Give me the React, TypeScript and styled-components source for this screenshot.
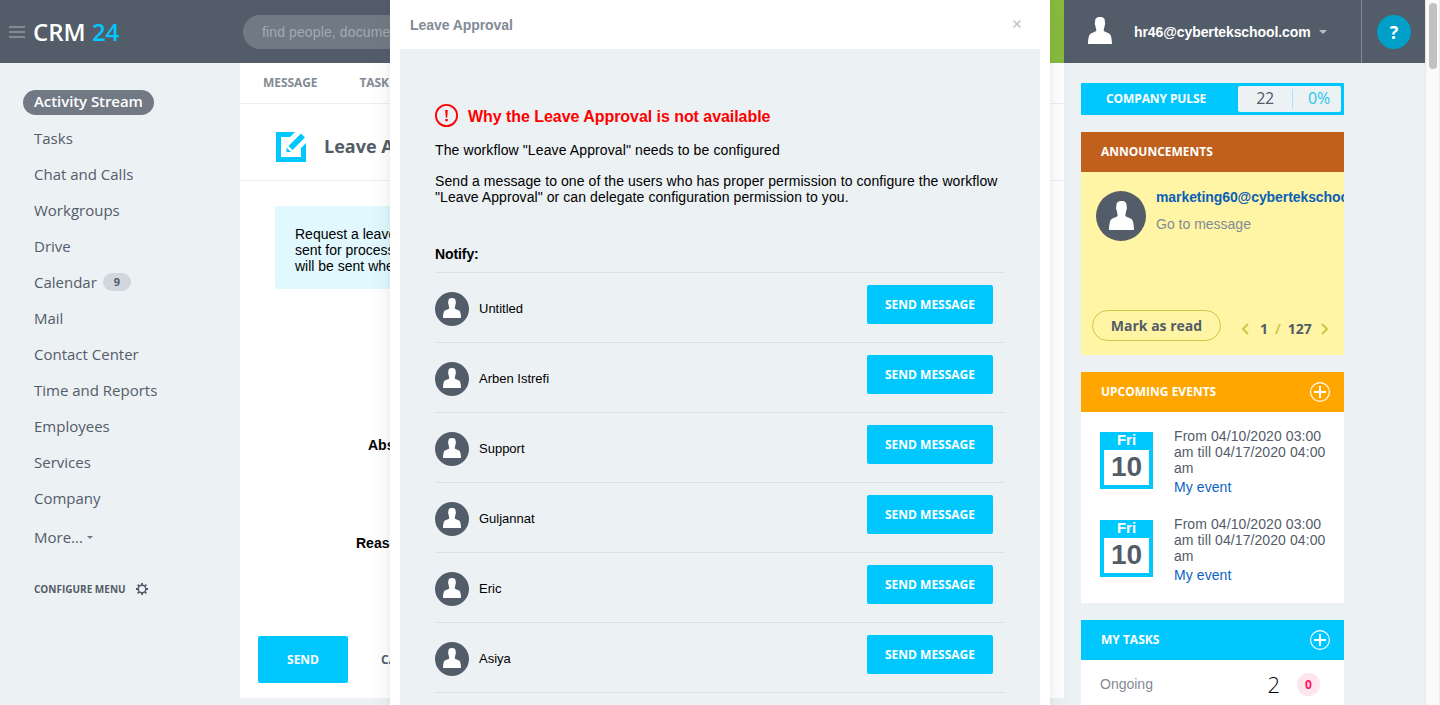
import React from 'react';
import styled, { createGlobalStyle } from 'styled-components';

const sans = `"Liberation Sans", Arial, Helvetica, sans-serif`;
const open = `"Open Sans", "Liberation Sans", sans-serif`;
const cyan = '#00c8ff';
const slate = '#535c69';

const GlobalStyle = createGlobalStyle`
  * { box-sizing: border-box; }
  html, body { margin: 0; padding: 0; overflow: hidden; }
  body { font-family: ${sans}; font-size: 14px; color: #000; background: #ecf1f4; }
`;

const Page = styled.div`
  position: relative;
  width: 1440px;
  height: 705px;
  overflow: hidden;
  display: flex;
  background: #ecf1f4;
`;
const Shell = styled.div`
  width: 1425px;
  display: flex;
  flex-direction: column;
`;
const Header = styled.header`
  height: 63px;
  flex: none;
  display: flex;
  align-items: center;
  background: #535c69;
`;
const Brand = styled.div`
  width: 243px;
  padding-left: 9px;
  display: flex;
  align-items: center;
  gap: 8px;
`;
const Burger = styled.div`
  width: 16px;
  height: 12px;
  margin-top: 1px;
  display: flex;
  flex-direction: column;
  justify-content: space-between;
  span { height: 2px; background: #848b94; }
`;
const Logo = styled.div`
  font: 600 24px/32px ${open};
  color: #fff;
  white-space: pre;
  span { color: ${cyan}; }
`;
const Search = styled.div`
  width: 300px;
  height: 34px;
  border-radius: 17px;
  background: #717a84;
  padding-left: 19px;
  font-size: 14px;
  line-height: 34px;
  letter-spacing: 0.12px;
  color: #a3a9b1;
`;
const ClockBlock = styled.div`
  width: 174px;
  height: 63px;
  margin-left: auto;
  background: #86bb3c;
`;
const UserBlock = styled.div`
  width: 298px;
  height: 63px;
  border-right: 1px solid #868d96;
  display: flex;
  align-items: center;
  padding: 1px 0 0 24px;
  color: #fff;
  svg { flex: none; margin-top: -4px; }
`;
const UserName = styled.div`
  margin-left: 22px;
  width: 177px;
  font-weight: bold;
  font-size: 14px;
  letter-spacing: -0.09px;
  white-space: nowrap;
`;
const Caret = styled.i<{ $size: number; $color: string }>`
  border: ${p => p.$size}px solid transparent;
  border-top-color: ${p => p.$color};
  border-bottom: 0;
`;
const HelpBlock = styled.div`
  width: 63px;
  padding: 1px 0 0 15px;
`;
const HelpButton = styled.div`
  width: 34px;
  height: 34px;
  border-radius: 50%;
  background: #009fc7;
  color: #fff;
  text-align: center;
  font: 700 18px/34px ${open};
`;

const Columns = styled.div`
  flex: 1;
  min-height: 0;
  display: flex;
`;
const Nav = styled.nav`
  width: 240px;
  padding: 27px 0 0 23px;
`;
const NavItem = styled.div<{ $active?: boolean }>`
  height: ${p => (p.$active ? 25 : 22)}px;
  width: max-content;
  display: flex;
  align-items: center;
  margin-bottom: ${p => (p.$active ? 12 : 14)}px;
  padding: 0 11px ${p => (p.$active ? 3 : 0)}px;
  border-radius: 13px;
  background: ${p => (p.$active ? '#717a84' : 'transparent')};
  color: ${p => (p.$active ? '#fff' : slate)};
  font: ${p => (p.$active ? 600 : 400)} 15px/22px ${open};
  letter-spacing: ${p => (p.$active ? '-0.07px' : '0')};
`;
const Counter = styled.span`
  width: 28px;
  height: 18px;
  margin-left: 6px;
  border-radius: 9px;
  background: #d0d8de;
  text-align: center;
  font: 700 11px/18px ${open};
`;
const MoreItem = styled(NavItem)`
  margin-top: 17px;
  gap: 4px;
`;
const Configure = styled.div`
  display: flex;
  align-items: center;
  gap: 10px;
  margin: 34px 0 0 11px;
  font: 700 10px/14px ${open};
  color: ${slate};
`;

const Feed = styled.main`
  width: 824px;
  height: 635px;
  background: #fff;
`;
const FeedTabs = styled.div`
  height: 41px;
  padding-left: 23px;
  display: flex;
  gap: 42px;
  border-bottom: 1px solid #eceef0;
  font: 700 12px/39px ${open};
  letter-spacing: -0.08px;
  color: #828b95;
`;
const FeedTitle = styled.div`
  height: 77px;
  padding: 9px 0 0 36px;
  display: flex;
  align-items: center;
  gap: 18px;
  border-bottom: 1px solid #eceef0;
  font: 700 18px/24px ${open};
  color: ${slate};
`;
const TitleText = styled.span`
  margin-top: -1px;
`;
const Hint = styled.div`
  width: 690px;
  height: 83px;
  margin: 25px 0 0 35px;
  padding: 20px 0 0 20px;
  border-radius: 2px;
  background: #e1f8fe;
  font-size: 14px;
  line-height: 16px;
`;
const FormLabel = styled.div<{ $top: number; $left: number }>`
  margin: ${p => p.$top}px 0 0 ${p => p.$left}px;
  font-weight: bold;
  font-size: 14px;
  line-height: 16px;
`;
const FormActions = styled.div`
  display: flex;
  margin: 85px 0 0 18px;
  gap: 33px;
  font: 700 12px/47px ${open};
  color: ${slate};
`;
const SendButton = styled.div`
  width: 90px;
  height: 47px;
  border-radius: 2px;
  background: ${cyan};
  color: #fff;
  text-align: center;
`;

const Side = styled.aside`
  padding: 20px 0 0 17px;
  width: 280px;
`;
const Pulse = styled.div`
  height: 32px;
  padding: 3px;
  display: flex;
  background: ${cyan};
  border-radius: 1px;
  margin-bottom: 17px;
`;
const PulseLabel = styled.div`
  width: 154px;
  padding-left: 22px;
  font: 700 12px/26px ${open};
  letter-spacing: -0.1px;
  color: #fff;
`;
const PulseBox = styled.div`
  width: 103px;
  height: 26px;
  border-radius: 2px;
  background: #ecf1f4;
  display: flex;
  align-items: center;
  font: 400 16px/24px ${open};
`;
const PulseValue = styled.div<{ $accent?: boolean }>`
  width: ${p => (p.$accent ? 48 : 55)}px;
  height: 20px;
  line-height: 19px;
  text-align: center;
  letter-spacing: -0.3px;
  padding-left: ${p => (p.$accent ? 4 : 0)}px;
  border-right: ${p => (p.$accent ? '0' : '1px solid #a6e6f7')};
  color: ${p => (p.$accent ? '#1fc6ee' : slate)};
`;
const Widget = styled.section`
  margin-bottom: 17px;
  background: #fff;
  overflow: hidden;
`;
const WidgetHead = styled.div<{ $color: string }>`
  height: 40px;
  padding: 0 14px 0 20px;
  display: flex;
  align-items: center;
  justify-content: space-between;
  background: ${p => p.$color};
  color: #fff;
  font: 700 12px/40px ${open};
`;
const Announcement = styled.div`
  height: 183px;
  padding: 0 0 14px 11px;
  display: flex;
  flex-direction: column;
  justify-content: space-between;
  background: #fff5a4;
`;
const AnnounceTop = styled.div`
  display: flex;
  gap: 10px;
  padding: 19px 0 0 4px;
`;
const AnnounceText = styled.div`
  margin-top: -2px;
  line-height: 16px;
  color: #828b95;
  white-space: nowrap;
  b { display: block; color: #0b5fb8; margin-bottom: 11px; letter-spacing: -0.08px; }
`;
const AnnounceBottom = styled.div`
  display: flex;
  align-items: center;
`;
const ReadButton = styled.div`
  width: 129px;
  height: 31px;
  border: 1px solid #cfc64c;
  border-radius: 16px;
  text-align: center;
  font: 700 14px/30px ${open};
  color: ${slate};
`;
const Pager = styled.div`
  display: flex;
  align-items: center;
  margin: 6px 0 0 20px;
  font: 700 14px/18px ${open};
  color: ${slate};
  span { color: #d2c54f; margin: 0 7px; }
`;
const Events = styled.div`
  height: 191px;
  padding: 16px 0 0 19px;
  display: flex;
  flex-direction: column;
  gap: 21px;
`;
const EventRow = styled.div`
  height: 67px;
  display: flex;
  gap: 21px;
`;
const DateTile = styled.div`
  width: 53px;
  height: 57px;
  margin-top: 4px;
  padding: 0 4px 4px;
  background: ${cyan};
  color: #fff;
  text-align: center;
  font-weight: bold;
  font-size: 15px;
  line-height: 16px;
`;
const DateNumber = styled.div`
  height: 35px;
  margin-top: 2px;
  background: #fff;
  color: ${slate};
  font-size: 28px;
  line-height: 33px;
`;
const EventText = styled.div`
  width: 160px;
  color: ${slate};
  line-height: 16px;
  letter-spacing: 0.08px;
  a { display: block; margin-top: 3px; color: #0b62c4; }
`;
const TaskRow = styled.div`
  height: 50px;
  display: flex;
  align-items: center;
  padding: 0 24px 0 19px;
  color: #828b95;
`;
const TaskLabel = styled.span`
  margin-top: -2px;
`;
const TaskCount = styled.div`
  margin: -2px 0 0 auto;
  color: #000;
  font: 300 22px/30px ${open};
`;
const TaskBadge = styled.div`
  width: 23px;
  height: 23px;
  margin: -1px 0 0 17px;
  border-radius: 50%;
  background: #ffe5ed;
  color: #ff1361;
  text-align: center;
  font: 700 12px/23px ${open};
`;

const ScrollTrack = styled.div`
  width: 15px;
  padding: 3px 0 0 3px;
  background: #fafafa;
  border-left: 1px solid #e8e8e8;
  border-right: 1px solid #ededed;
`;
const ScrollThumb = styled.div`
  width: 8px;
  height: 66px;
  border-radius: 4px;
  background: #c1c1c1;
`;

const Modal = styled.div`
  position: absolute;
  left: 390px;
  top: 0;
  width: 660px;
  height: 705px;
  padding: 0 10px;
  display: flex;
  flex-direction: column;
  background: #fff;
  box-shadow: 0 7px 21px rgba(83, 92, 105, 0.12), 0 -1px 6px rgba(83, 92, 105, 0.06);
`;
const ModalHead = styled.div`
  height: 49px;
  flex: none;
  display: flex;
  justify-content: space-between;
  align-items: center;
  padding: 1px 19px 0 10px;
  font-weight: bold;
  font-size: 14px;
  letter-spacing: -0.07px;
  color: #828b95;
  svg { margin-top: -3px; }
`;
const ModalBody = styled.div`
  flex: 1;
  overflow: hidden;
  padding: 55px 35px 0;
  background: #ecf1f4;
  line-height: 16px;
`;
const Warning = styled.div`
  height: 24px;
  display: flex;
  align-items: center;
  gap: 9px;
  color: #f00;
  font-weight: bold;
  font-size: 16px;
  letter-spacing: -0.05px;
`;
const WarningText = styled.span`
  margin-top: 2px;
`;
const Paragraph = styled.p`
  margin: 14px 0 15px;
  letter-spacing: 0.11px;
  & + & { margin: 0 0 41px; letter-spacing: 0.08px; }
`;
const NotifyTitle = styled.div`
  font-weight: bold;
  letter-spacing: -0.1px;
  margin-bottom: 10px;
`;
const UserRow = styled.div`
  height: 70px;
  padding: 12px 12px 0 0;
  display: flex;
  border-top: 1px solid #dbe0e4;
  font-size: 13px;
`;
const Person = styled.div`
  flex: 1;
  height: 48px;
  display: flex;
  align-items: center;
  gap: 10px;
`;
const Avatar = styled.div<{ $size: number }>`
  width: ${p => p.$size}px;
  height: ${p => p.$size}px;
  flex: none;
  border-radius: 50%;
  background: ${slate};
  display: flex;
  align-items: center;
  justify-content: center;
  svg { margin-top: -2px; }
`;
const MessageButton = styled.div`
  width: 126px;
  height: 39px;
  border-radius: 2px;
  background: ${cyan};
  color: #fff;
  text-align: center;
  font: 700 12px/39px ${open};
`;

const Bust = ({ w, h }: { w: number; h: number }) => (
  <svg width={w} height={h} viewBox="0 0 24 28" preserveAspectRatio="none">
    <path
      fill="#fff"
      d="M12 0C15.6 0 17 1.6 16.9 5C17.4 6 17.3 8 16.6 9C16.4 10.8 16 12 15.8 12.8V14.6C17.4 16 20.6 16.4 22 17.8C23.4 19.4 23.9 24 24 28H0C.1 24 .6 19.4 2 17.8C3.4 16.4 6.6 16 8.2 14.6V12.8C8 12 7.6 10.8 7.4 9C6.7 8 6.6 6 7.1 5C7 1.6 8.4 0 12 0Z"
    />
  </svg>
);
const Plus = () => (
  <svg width="20" height="20" viewBox="0 0 20 20" fill="none" stroke="#fff">
    <circle cx="10" cy="10" r="9.4" strokeWidth="1.1" />
    <path d="M10 4v12M4 10h12" strokeWidth="2" />
  </svg>
);
const Arrow = ({ d }: { d: string }) => (
  <svg width="8" height="12" viewBox="0 0 8 12" fill="none" stroke="#cfc54c" strokeWidth="2">
    <path d={d} />
  </svg>
);
const Gear = () => (
  <svg width="12" height="12" viewBox="0 0 12 12" fill="none" stroke={slate}>
    <circle cx="6" cy="6" r="3.8" strokeWidth="1.5" />
    <path
      strokeWidth="1.8"
      d="M6 0v2M6 10v2M0 6h2M10 6h2M1.7 1.7l1.4 1.4M8.9 8.9l1.4 1.4M1.7 10.3l1.4-1.4M8.9 3.1l1.4-1.4"
    />
  </svg>
);
const EditIcon = () => (
  <svg width="30" height="30" viewBox="0 0 30 30" fill={cyan}>
    <path d="M0 0H19L14 5H5V25H25V16L30 11V30H0Z" />
    <path d="M25 1.5L29 5.5L16.5 18L12.5 14Z" />
    <path d="M10.5 15.5L15 20H10.5Z" />
  </svg>
);
const Alert = () => (
  <svg width="24" height="24" viewBox="0 0 24 24" fill="none" stroke="#f00">
    <circle cx="11.5" cy="11.5" r="10.6" strokeWidth="1.8" />
    <path d="M10.2 6h2.6l-.6 7.6h-1.4zM10.3 15h2.4v2.2h-2.4z" fill="#f00" stroke="none" />
  </svg>
);

const menu = [
  'Tasks', 'Chat and Calls', 'Workgroups', 'Drive', 'Calendar', 'Mail',
  'Contact Center', 'Time and Reports', 'Employees', 'Services', 'Company',
];
const users = ['Untitled', 'Arben Istrefi', 'Support', 'Guljannat', 'Eric', 'Asiya'];

const Event = () => (
  <EventRow>
    <DateTile>
      Fri
      <DateNumber>10</DateNumber>
    </DateTile>
    <EventText>
      From 04/10/2020 03:00 am till 04/17/2020 04:00 am
      <a>My event</a>
    </EventText>
  </EventRow>
);

export default function App() {
  return (
    <Page>
      <GlobalStyle />
      <Shell>
        <Header>
          <Brand>
            <Burger><span /><span /><span /></Burger>
            <Logo>CRM <span>24</span></Logo>
          </Brand>
          <Search>find people, documents</Search>
          <ClockBlock />
          <UserBlock>
            <Bust w={24} h={27} />
            <UserName>hr46@cybertekschool.com</UserName>
            <Caret $size={4} $color="#b8bdc4" style={{ marginLeft: 8 }} />
          </UserBlock>
          <HelpBlock><HelpButton>?</HelpButton></HelpBlock>
        </Header>
        <Columns>
          <Nav>
            <NavItem $active>Activity Stream</NavItem>
            {menu.map(m => (
              <NavItem key={m}>
                {m}
                {m === 'Calendar' && <Counter>9</Counter>}
              </NavItem>
            ))}
            <MoreItem>More... <Caret $size={3} $color="#717a84" /></MoreItem>
            <Configure>CONFIGURE MENU <Gear /></Configure>
          </Nav>
          <Feed>
            <FeedTabs><span>MESSAGE</span><span>TASK</span></FeedTabs>
            <FeedTitle><EditIcon /><TitleText>Leave Approval</TitleText></FeedTitle>
            <Hint>
              Request a leave<br />sent for processing<br />will be sent when
            </Hint>
            <FormLabel $top={148} $left={128}>Absence</FormLabel>
            <FormLabel $top={82} $left={116}>Reason</FormLabel>
            <FormActions><SendButton>SEND</SendButton>CANCEL</FormActions>
          </Feed>
          <Side>
            <Pulse>
              <PulseLabel>COMPANY PULSE</PulseLabel>
              <PulseBox>
                <PulseValue>22</PulseValue>
                <PulseValue $accent>0%</PulseValue>
              </PulseBox>
            </Pulse>
            <Widget>
              <WidgetHead $color="#c0601c">ANNOUNCEMENTS</WidgetHead>
              <Announcement>
                <AnnounceTop>
                  <Avatar $size={50}><Bust w={25} h={29} /></Avatar>
                  <AnnounceText>
                    <b>marketing60@cybertekschool.com</b>
                    Go to message
                  </AnnounceText>
                </AnnounceTop>
                <AnnounceBottom>
                  <ReadButton>Mark as read</ReadButton>
                  <Pager>
                    <Arrow d="M7 1L2 6l5 5" />
                    <div style={{ marginLeft: 11 }}>1</div>
                    <span>/</span>
                    <div style={{ marginRight: 9 }}>127</div>
                    <Arrow d="M1 1l5 5-5 5" />
                  </Pager>
                </AnnounceBottom>
              </Announcement>
            </Widget>
            <Widget>
              <WidgetHead $color="#ffa600">UPCOMING EVENTS <Plus /></WidgetHead>
              <Events><Event /><Event /></Events>
            </Widget>
            <Widget>
              <WidgetHead $color={cyan}>MY TASKS <Plus /></WidgetHead>
              <TaskRow>
                <TaskLabel>Ongoing</TaskLabel>
                <TaskCount>2</TaskCount>
                <TaskBadge>0</TaskBadge>
              </TaskRow>
            </Widget>
          </Side>
        </Columns>
      </Shell>
      <ScrollTrack><ScrollThumb /></ScrollTrack>
      <Modal>
        <ModalHead>
          Leave Approval
          <svg width="8" height="8" viewBox="0 0 8 8" stroke="#c6cacf" strokeWidth="1.9">
            <path d="M.6.6l6.8 6.8M7.4.6L.6 7.4" />
          </svg>
        </ModalHead>
        <ModalBody>
          <Warning><Alert /><WarningText>Why the Leave Approval is not available</WarningText></Warning>
          <Paragraph>The workflow "Leave Approval" needs to be configured</Paragraph>
          <Paragraph>
            Send a message to one of the users who has proper permission to configure the workflow
            "Leave Approval" or can delegate configuration permission to you.
          </Paragraph>
          <NotifyTitle>Notify:</NotifyTitle>
          {users.map(u => (
            <UserRow key={u}>
              <Person><Avatar $size={34}><Bust w={18} h={20} /></Avatar>{u}</Person>
              <MessageButton>SEND MESSAGE</MessageButton>
            </UserRow>
          ))}
          <UserRow />
        </ModalBody>
      </Modal>
    </Page>
  );
}
